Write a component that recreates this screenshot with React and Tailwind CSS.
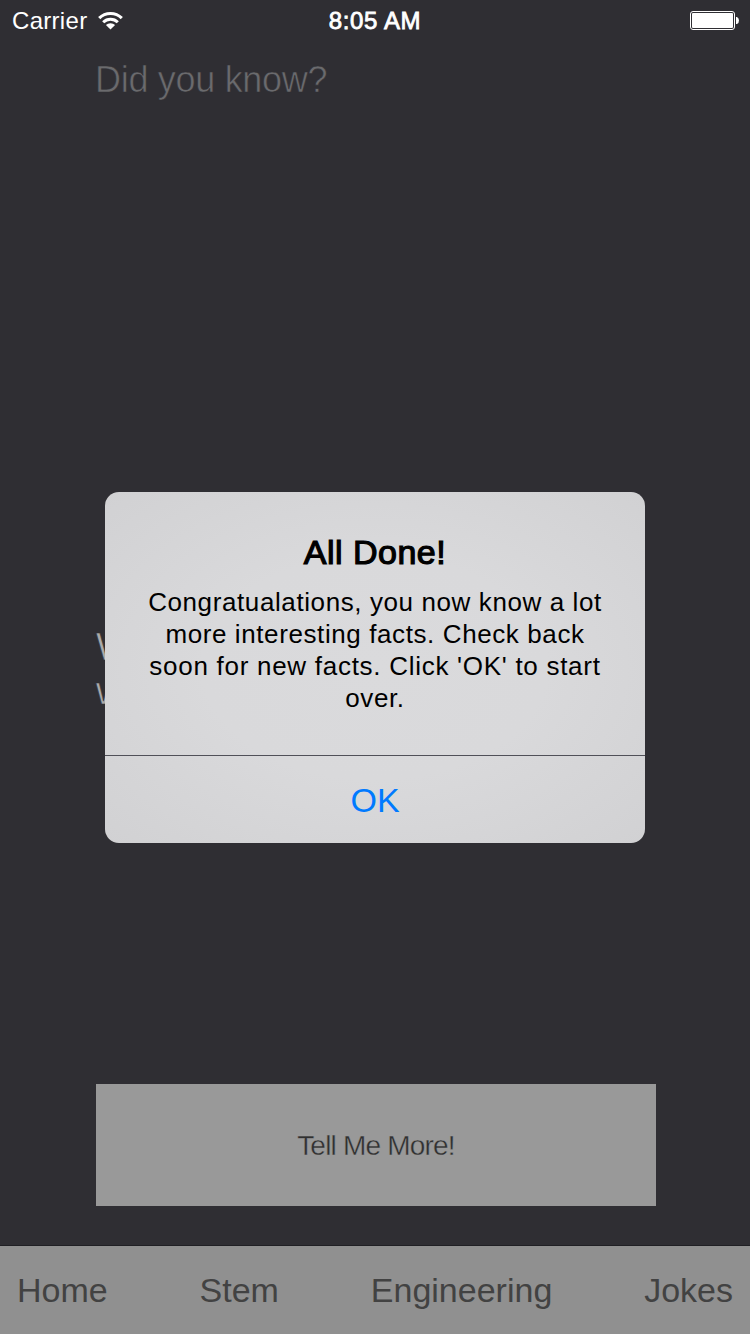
const NAV_ITEMS = ["Home", "Stem", "Engineering", "Jokes"];

function WifiIcon() {
  return (
    <svg className="ml-[11px] h-[19px] w-[25px]" viewBox="0 0 25 19" fill="none" stroke="#fff">
      <path d="M1.2 7.1a16 16 0 0 1 22.6 0" strokeWidth="3.1" />
      <path d="M5.2 11.3a10.3 10.3 0 0 1 14.6 0" strokeWidth="3" />
      <path d="M12.5 18.6l-4.6-4.5a6.4 6.4 0 0 1 9.2 0z" fill="#fff" stroke="none" />
    </svg>
  );
}

function BatteryIcon() {
  return (
    <svg className="h-[20px] w-[50px]" viewBox="0 0 50 20">
      <rect x="0.5" y="1.5" width="44" height="18" rx="2.5" fill="none" stroke="#fff" />
      <rect x="2" y="3" width="41" height="15" rx="1" fill="#fff" />
      <path d="M46 7h1q2 1 2 3.5t-2 3.5h-1z" fill="#fff" />
    </svg>
  );
}

function StatusBar() {
  return (
    <header className="grid h-10 grid-cols-3 items-center text-[24px] leading-10 text-white">
      <div className="flex items-center pl-3 tracking-[0.3px]">
        <span className="h-10 pt-px">Carrier</span>
        <WifiIcon />
      </div>
      <div className="h-10 pt-px text-center tracking-[0.6px] [-webkit-text-stroke:0.8px_#fff]">8:05 AM</div>
      <div className="flex justify-end pr-[10px]">
        <BatteryIcon />
      </div>
    </header>
  );
}

function Alert() {
  return (
    <div
      role="alertdialog"
      className="absolute top-[492px] left-[105px] flex h-[351px] w-[540px] flex-col overflow-hidden rounded-[14px] bg-[radial-gradient(ellipse_at_center,#dadadc_0%,#d9d9db_45%,#d1d1d3_100%)] text-center text-black"
    >
      <div className="h-[263px] pt-[40px]">
        <h2 className="text-[34px] leading-[40px] tracking-[0.5px] [-webkit-text-stroke:1.2px_#000]">All Done!</h2>
        <p className="mt-[14px] text-[26px] leading-8 tracking-[0.6px]">
          Congratualations, you now know a lot
          <br />
          more interesting facts. Check back
          <br />
          <span className="tracking-[0.72px]">soon for new facts. Click 'OK' to start</span>
          <br />
          over.
        </p>
      </div>
      <button className="h-[88px] border-t border-[#505058] pt-[2px] text-[34px] text-[#007aff]">OK</button>
    </div>
  );
}

export default function App() {
  return (
    <div className="relative flex h-[1334px] w-[750px] flex-col overflow-hidden bg-[#2f2e33] font-['Liberation_Sans',Arial,sans-serif]">
      <StatusBar />
      <main className="flex grow flex-col px-[94px]">
        <h1 className="mt-[18px] ml-px text-[36px] leading-[44px] tracking-[-0.3px] text-[#6a6a6d] [-webkit-text-stroke:0.6px_#2f2e33]">
          Did you know?
        </h1>
        <p className="mt-[523px] ml-[2px] text-[38px] leading-[44px] text-[#aaaaab] [-webkit-text-stroke:0.6px_#2f2e33]">
          W
          <br />w
        </p>
        <button className="mt-auto mb-[39px] ml-[2px] h-[122px] w-[560px] bg-[#999] pt-[2px] text-[28px] tracking-[-0.8px] text-[#303030] [-webkit-text-stroke:0.4px_#999]">
          Tell Me More!
        </button>
      </main>
      <nav className="flex h-[89px] items-center justify-between border-t border-[#202024] bg-[#909090] px-[17px] text-[34px] text-[#424242]">
        {NAV_ITEMS.map((item) => (
          <span key={item}>{item}</span>
        ))}
      </nav>
      <Alert />
    </div>
  );
}
